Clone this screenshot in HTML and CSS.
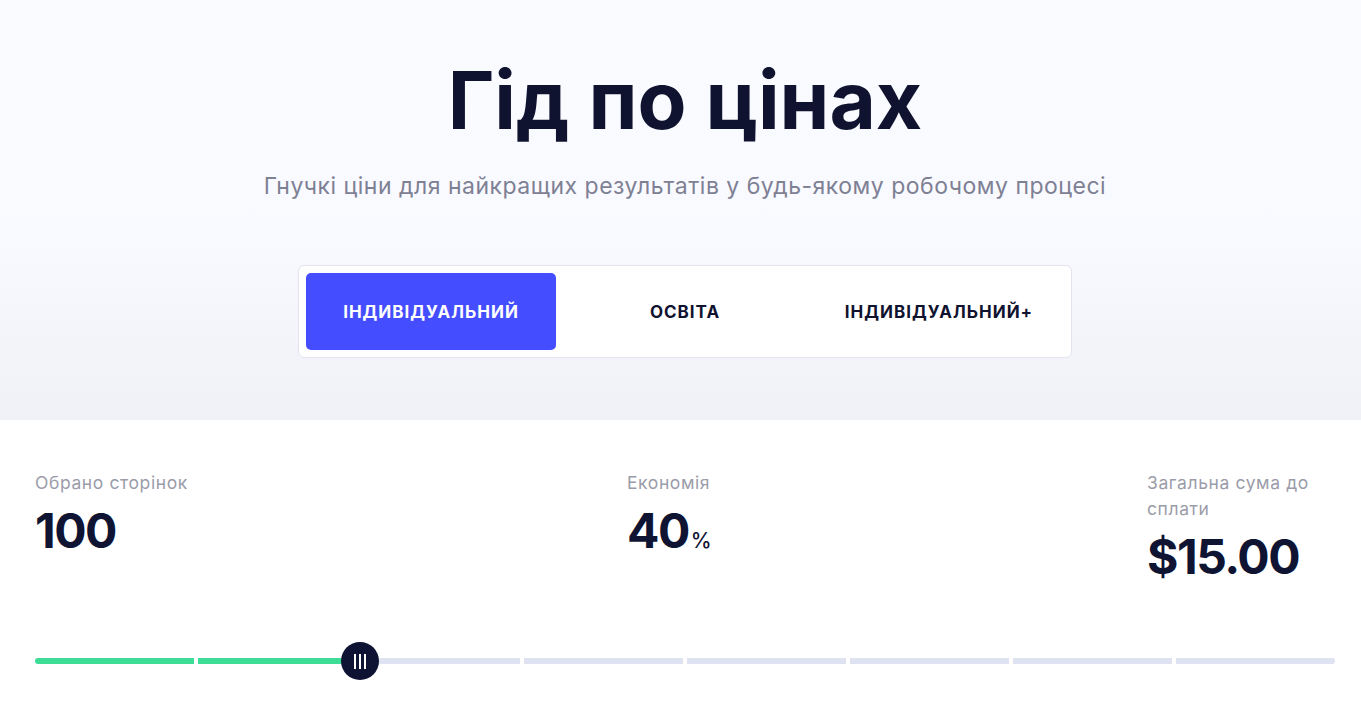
FILE: index.html
```html
<!DOCTYPE html>
<html lang="uk">
<head>
  <meta charset="UTF-8" />
  <meta name="viewport" content="width=device-width, initial-scale=1.0" />
  <title>Гід по цінах</title>
  <link rel="stylesheet" href="styles.css">
</head>
<body>
  <header class="hero">
    <h1 class="hero-title">Гід по цінах</h1>
    <p class="hero-sub">Гнучкі ціни для найкращих результатів у будь-якому робочому процесі</p>
    <div class="plans">
      <button class="plan plan-active">Індивідуальний</button>
      <button class="plan">Освіта</button>
      <button class="plan">Індивідуальний+</button>
    </div>
  </header>

  <main class="calc">
    <div class="stats">
      <div class="stat">
        <div class="stat-label">Обрано сторінок</div>
        <div class="stat-value">100</div>
      </div>
      <div class="stat">
        <div class="stat-label">Економія</div>
        <div class="stat-value">40<span class="stat-unit">%</span></div>
      </div>
      <div class="stat">
        <div class="stat-label">Загальна сума до сплати</div>
        <div class="stat-value">$15.00</div>
      </div>
    </div>

    <div class="slider">
      <div class="track">
        <span class="seg seg-on"></span>
        <span class="seg seg-on"></span>
        <span class="seg"></span>
        <span class="seg"></span>
        <span class="seg"></span>
        <span class="seg"></span>
        <span class="seg"></span>
        <span class="seg"></span>
      </div>
      <div class="thumb" style="left: 25%">
        <i></i><i></i><i></i>
      </div>
    </div>
  </main>
</body>
</html>
```

FILE: styles.css
```css
* { box-sizing: border-box; margin: 0; padding: 0; }
body { background: #fff; color: #0f1432; font-family: 'Inter', 'Noto Sans', sans-serif; }

.hero {
  height: 420px;
  padding: 53px 0 0 9px;
  text-align: center;
  background: linear-gradient(180deg, #fafbff 0%, #f9faff 55%, #f0f1f6 100%);
}
.hero-title { font-size: 80px; line-height: 94px; font-weight: 700; letter-spacing: 0; color: #10132f; }
.hero-sub { margin-top: 24px; font-size: 23px; line-height: 30px; letter-spacing: 0.5px; color: #7e8094; }

.plans {
  display: inline-flex;
  gap: 4px;
  margin-top: 64px;
  padding: 7px;
  background: #fff;
  border: 1px solid #e3e4ef;
  border-radius: 6px;
}
.plan {
  width: 250px;
  height: 77px;
  border: none;
  border-radius: 5px;
  background: transparent;
  color: #10132f;
  font-family: inherit;
  font-size: 17px;
  font-weight: 700;
  letter-spacing: 1px;
  text-transform: uppercase;
  cursor: pointer;
}
.plan-active { background: #444dff; color: #fff; }

.calc { padding: 50px 26px 0 35px; }
.stats { display: grid; grid-template-columns: 592px 1fr 188px; align-items: start; }
.stat-label { font-size: 17.5px; line-height: 26px; letter-spacing: 0.6px; color: #9b9ca9; }
.stat-value { margin-top: 6px; font-size: 48px; line-height: 58px; font-weight: 700; letter-spacing: -1.5px; color: #0f1432; }
.stat-unit { font-size: 21px; font-weight: 500; letter-spacing: 0; margin-left: 2px; }

.slider { position: relative; height: 38px; margin-top: 56px; display: flex; align-items: center; }
.track { display: flex; gap: 4px; width: 100%; }
.seg { flex: 1; height: 6px; background: #dfe2f1; }
.seg:first-child { border-radius: 3px 0 0 3px; }
.seg:last-child { border-radius: 0 3px 3px 0; }
.seg-on { background: #3ddc97; }

.thumb {
  position: absolute;
  top: 0;
  width: 38px;
  height: 38px;
  margin-left: -19px;
  border-radius: 50%;
  background: #0f1333;
  display: flex;
  justify-content: center;
  align-items: center;
  gap: 3px;
}
.thumb i { display: block; width: 2px; height: 15px; background: #fff; }
```
